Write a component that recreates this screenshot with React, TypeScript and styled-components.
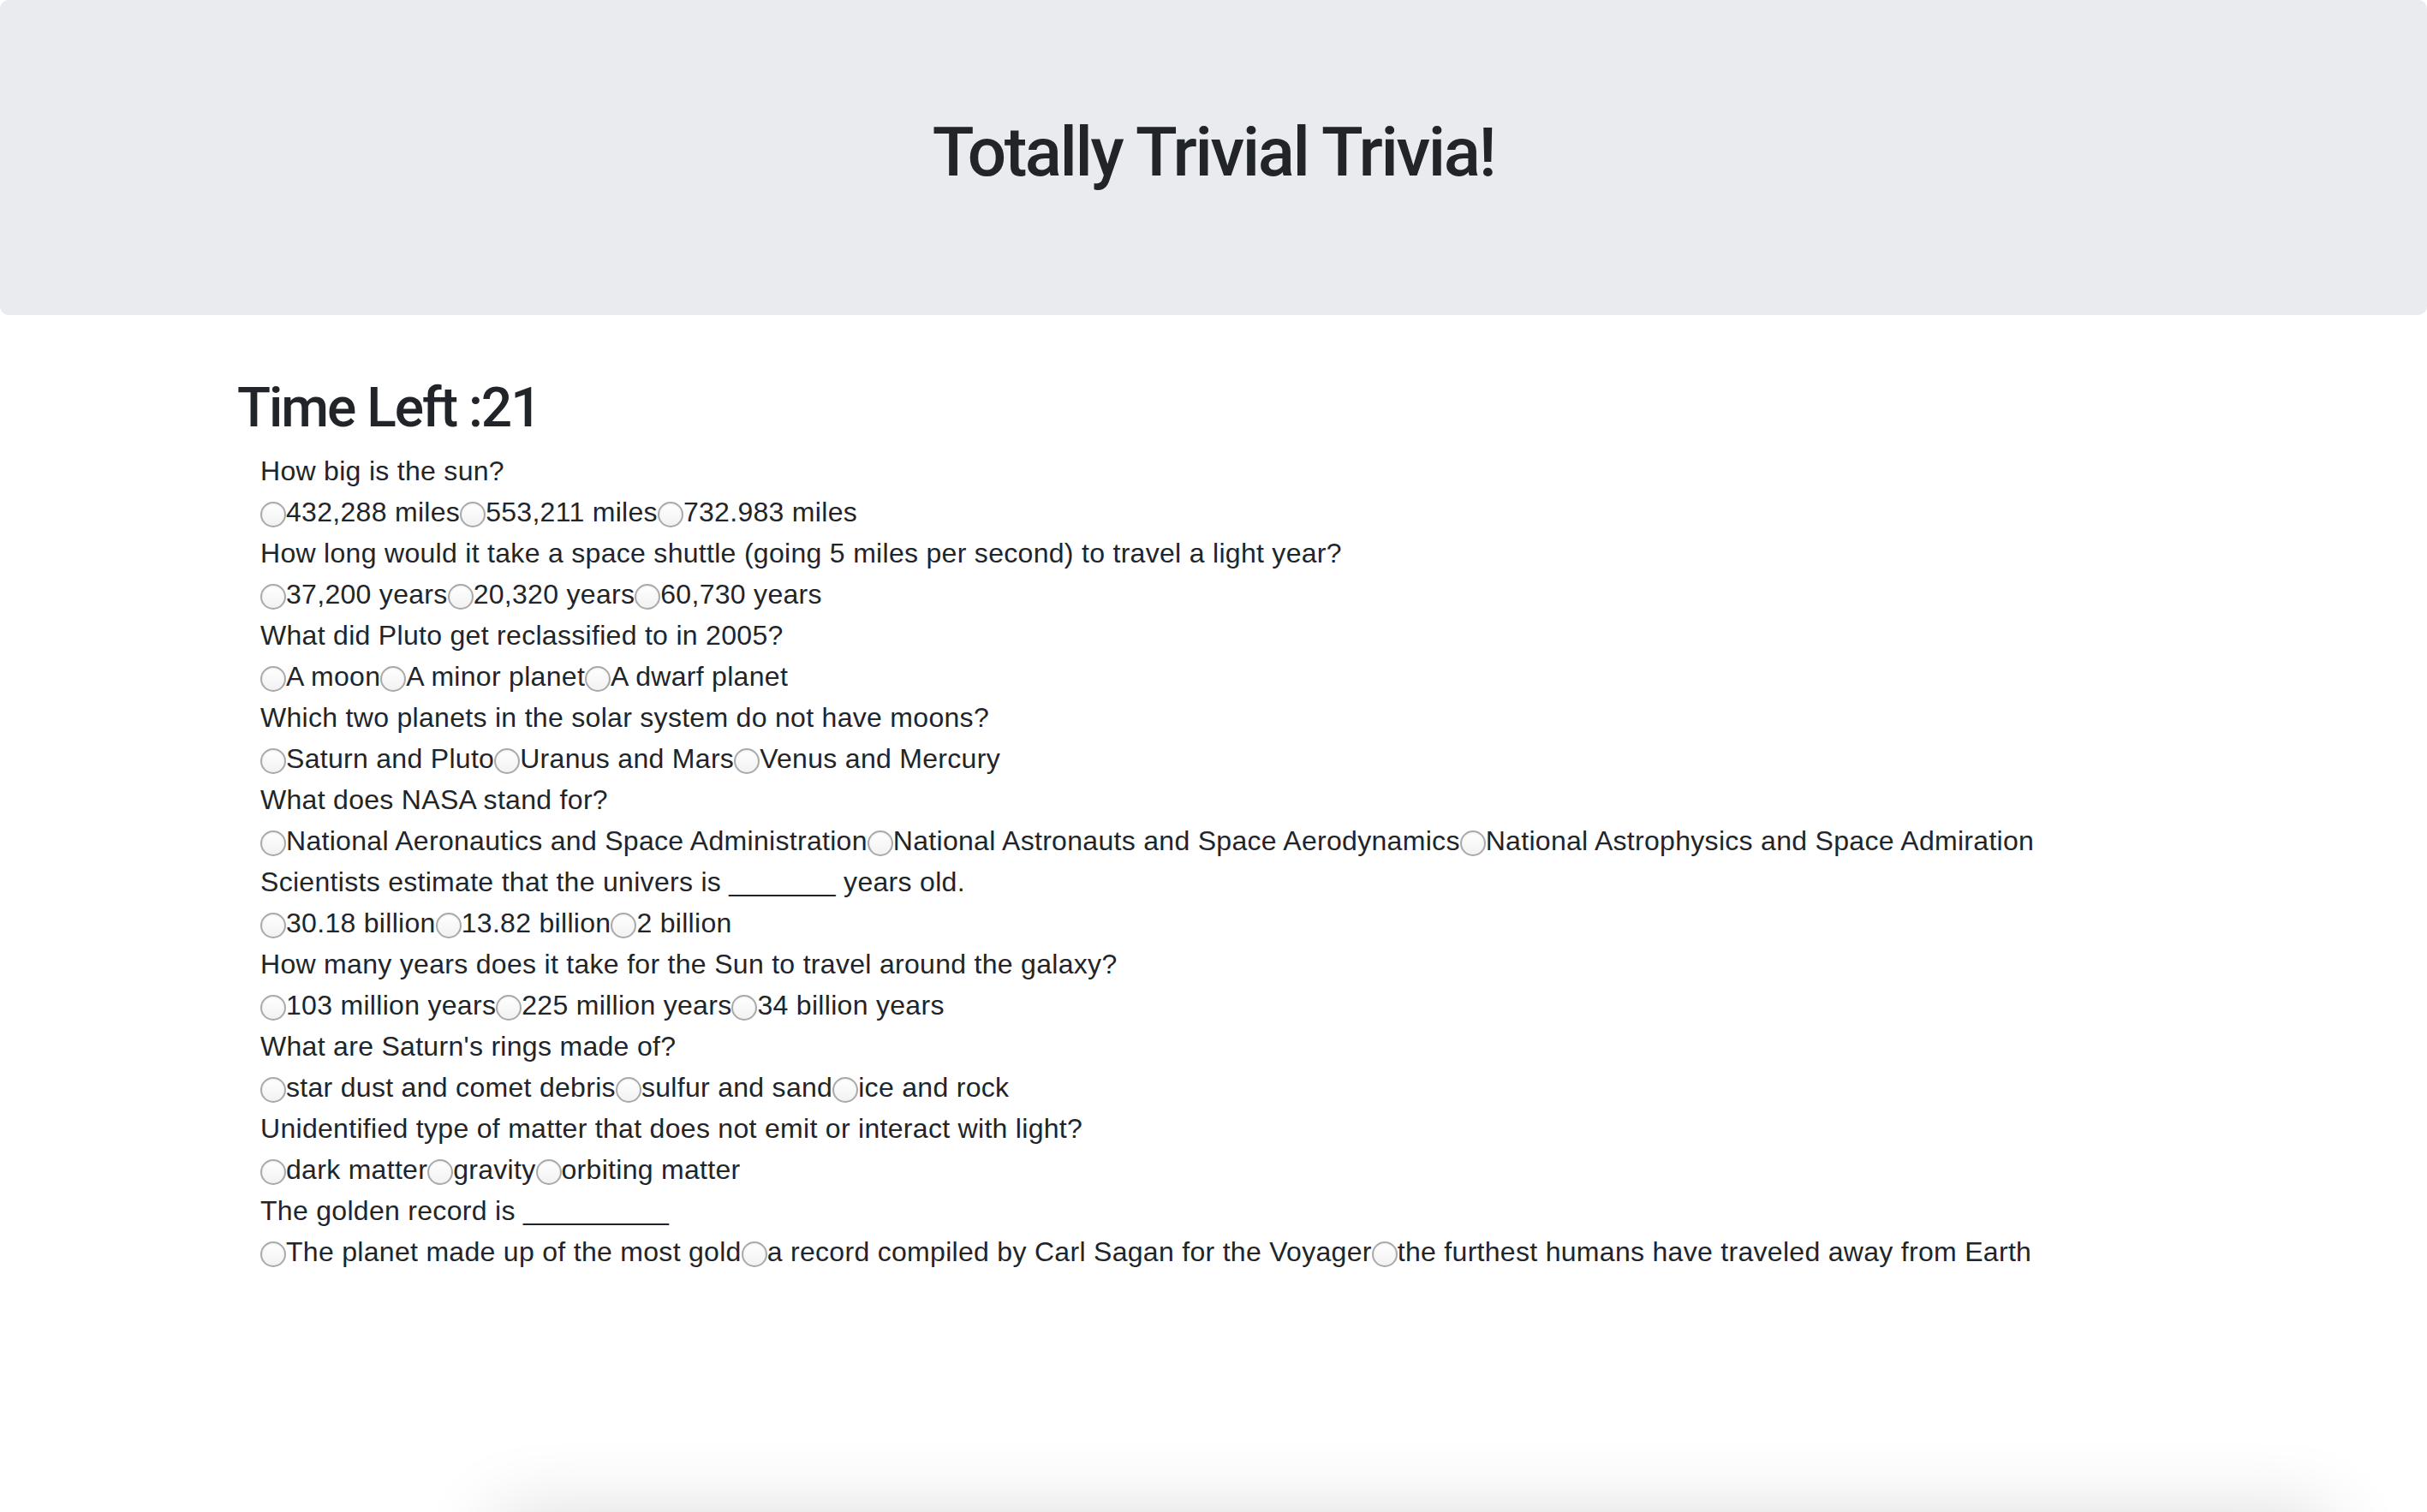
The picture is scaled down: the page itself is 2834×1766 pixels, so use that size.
import React from "react";
import styled, { createGlobalStyle } from "styled-components";

const GlobalStyle = createGlobalStyle`
  html, body {
    margin: 0;
    padding: 0;
    background: #ffffff;
  }
  body {
    font-family: "Liberation Sans", Arial, sans-serif;
    color: #212529;
    -webkit-font-smoothing: antialiased;
  }
`;

const Jumbotron = styled.header`
  background: #e9ebef;
  padding: 130px 64px 126px;
  border-radius: 10px;
  margin-bottom: 64px;
  text-align: center;
`;

const Title = styled.h1`
  margin: 0 0 16px;
  font-family: Roboto, "Liberation Sans", sans-serif;
  font-weight: 500;
  font-size: 80px;
  line-height: 96px;
  letter-spacing: -2.4px;
  color: #212529;
`;

const Container = styled.main`
  width: 2280px;
  margin: 0 auto;
  padding-top: 7px;
`;

const Timer = styled.h2`
  margin: 0 0 10px;
  font-family: Roboto, "Liberation Sans", sans-serif;
  font-weight: 500;
  font-size: 64px;
  line-height: 76.8px;
  letter-spacing: -2px;
  color: #212529;
`;

const QuizList = styled.div`
  padding-left: 27px;
`;

const Question = styled.div`
  font-size: 32px;
  line-height: 48px;
  letter-spacing: 0.3px;
  white-space: nowrap;
`;

const Blank = styled.span`
  letter-spacing: -2.6px;
  margin-right: 3px;
`;

const Options = styled.div`
  font-size: 32px;
  line-height: 48px;
  letter-spacing: 0.3px;
  white-space: nowrap;
`;

const OptionLabel = styled.label`
  display: inline;
  cursor: pointer;
`;

const Radio = styled.input.attrs({ type: "radio" })`
  appearance: none;
  -webkit-appearance: none;
  margin: 0;
  width: 30px;
  height: 30px;
  border-radius: 50%;
  border: 2px solid #a9a9a9;
  background: linear-gradient(#ffffff, #f2f2f2);
  box-shadow: inset 0 1px 2px rgba(0, 0, 0, 0.06);
  vertical-align: -7px;
  box-sizing: border-box;
`;

const Footer = styled.footer`
  margin: 281px 0 0 580px;
  width: 2140px;
  height: 120px;
  background: #f0f0f0;
  box-shadow: 0 0 90px rgba(0, 0, 0, 0.14);
`;

type Item = { q: React.ReactNode; a: string[] };

const quiz: Item[] = [
  { q: "How big is the sun?", a: ["432,288 miles", "553,211 miles", "732.983 miles"] },
  {
    q: "How long would it take a space shuttle (going 5 miles per second) to travel a light year?",
    a: ["37,200 years", "20,320 years", "60,730 years"],
  },
  { q: "What did Pluto get reclassified to in 2005?", a: ["A moon", "A minor planet", "A dwarf planet"] },
  {
    q: "Which two planets in the solar system do not have moons?",
    a: ["Saturn and Pluto", "Uranus and Mars", "Venus and Mercury"],
  },
  {
    q: "What does NASA stand for?",
    a: [
      "National Aeronautics and Space Administration",
      "National Astronauts and Space Aerodynamics",
      "National Astrophysics and Space Admiration",
    ],
  },
  {
    q: (
      <>
        Scientists estimate that the univers is <Blank>________</Blank> years old.
      </>
    ),
    a: ["30.18 billion", "13.82 billion", "2 billion"],
  },
  {
    q: "How many years does it take for the Sun to travel around the galaxy?",
    a: ["103 million years", "225 million years", "34 billion years"],
  },
  {
    q: "What are Saturn's rings made of?",
    a: ["star dust and comet debris", "sulfur and sand", "ice and rock"],
  },
  {
    q: "Unidentified type of matter that does not emit or interact with light?",
    a: ["dark matter", "gravity", "orbiting matter"],
  },
  {
    q: (
      <>
        The golden record is <Blank>___________</Blank>
      </>
    ),
    a: [
      "The planet made up of the most gold",
      "a record compiled by Carl Sagan for the Voyager",
      "the furthest humans have traveled away from Earth",
    ],
  },
];

export default function App() {
  return (
    <>
      <GlobalStyle />
      <Jumbotron>
        <Title>Totally Trivial Trivia!</Title>
      </Jumbotron>
      <Container>
        <Timer>Time Left :21</Timer>
        <QuizList>
          {quiz.map((item, qi) => (
            <React.Fragment key={qi}>
              <Question>{item.q}</Question>
              <Options>
                {item.a.map((opt, oi) => (
                  <OptionLabel key={oi}>
                    <Radio name={`q${qi}`} value={opt} />
                    {opt}
                  </OptionLabel>
                ))}
              </Options>
            </React.Fragment>
          ))}
        </QuizList>
      </Container>
      <Footer />
    </>
  );
}
